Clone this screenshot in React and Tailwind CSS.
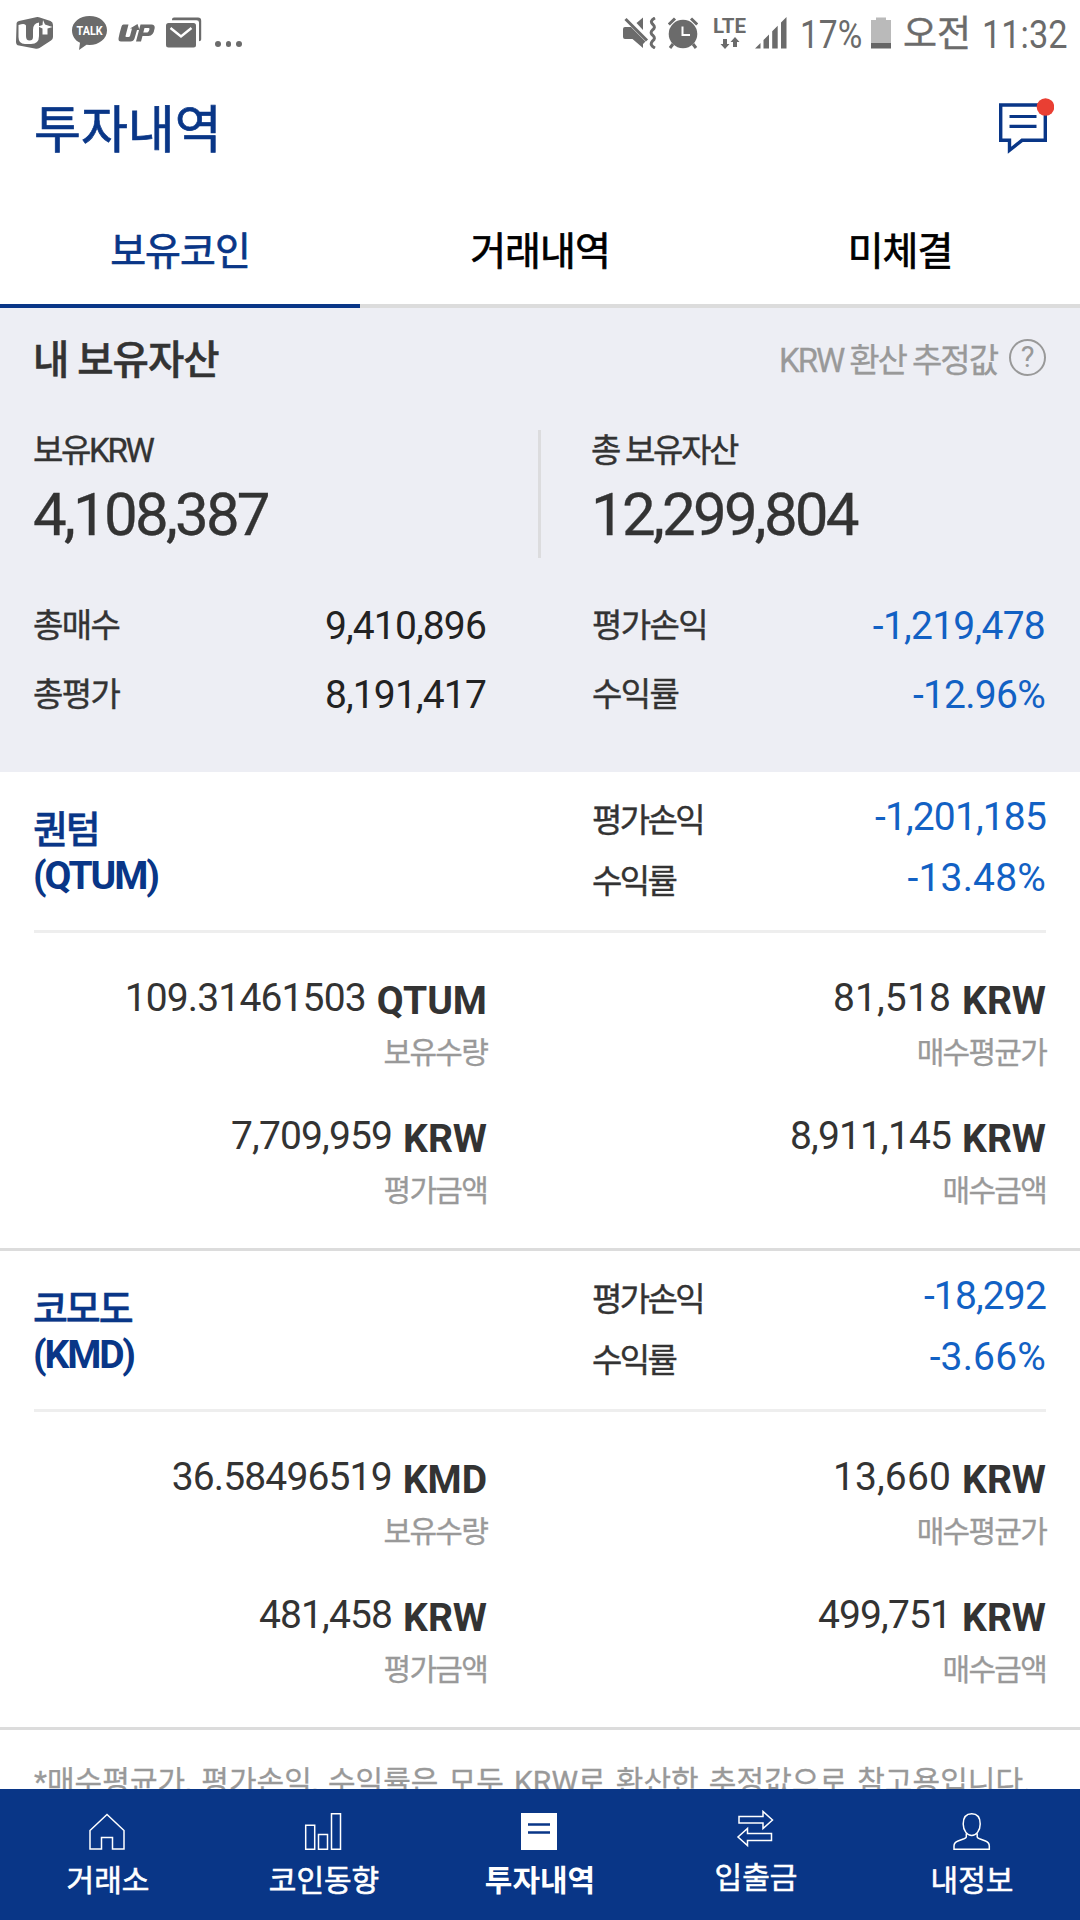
/* ---------- status bar icons ---------- */
function UPlusIcon() {
  return (
    <svg className="ml-4 h-8 w-[38px]" viewBox="0 0 38 32" fill="#6b6b6b">
      <path d="M3 4 Q1 4.6 0.600 6 L0 25 Q0 28 3 28.600 L20 31.800 Q22 32 23.500 31 L35 23.500 Q37 22 37 20 V8 Q37 5 34.500 4 L23 0.300 Q21.500 -0.200 20 0.200 Z" />
      <path d="M2.500 8 Q9 5.600 10 8.500 V19 Q10 23.500 13.500 23.500 Q17 23.500 17 20 V13 Q17 6 23 5.500 V19 Q23 27 15 27 H9 Q2.500 27 2.500 20 Z" fill="#fff" />
      <path d="M27 3 L29 7.500 L36.500 10 L31.500 11.500 V17.500 H26.500 V11.500 L22 9.500 L26.500 8 Z" fill="#fff" />
    </svg>
  );
}

function TalkIcon() {
  return (
    <svg className="ml-[18px] h-[34px] w-9" viewBox="0 0 36 34">
      <path d="M17.500 0 C27.500 0 35 6 35 14.300 C35 23 27 29 17.500 29 L14.500 28.700 L7 34 L8 26.800 C3 24.500 0 20 0 14.300 C0 6 8 0 17.500 0 Z" fill="#6b6b6b" />
      <text x="17.600" y="19" textAnchor="middle" fontSize="12.500" fontWeight="700" fontFamily="Roboto, sans-serif" fill="#fff" textLength="26" lengthAdjust="spacingAndGlyphs">TALK</text>
    </svg>
  );
}

function UpIcon() {
  return (
    <svg className="ml-[10px] h-[18px] w-[38px]" viewBox="0 0 38 18" fill="#6b6b6b">
      <path d="M5.500 0.500 H10.500 L7.500 12 Q7.300 13 8.500 13 H10.500 Q11.500 13 12 12 L14 4.500 H12 L19.500 0 L21.500 6 H19 L16.500 14.500 Q15.500 17.500 12.500 17.500 H3 Q0 17.500 0.600 14 Q1.500 9 3.500 2.500 Q4 0.500 5.500 0.500 Z" />
      <path fillRule="evenodd" d="M22.500 0.500 H33.500 Q37 0.500 36.700 4 Q35.500 12 30.500 12 H24.500 L23 17.500 H18 Z M26.500 4 L25.300 8.500 H29.500 Q31.300 8 31.500 5 Q31.500 4 30.500 4 Z" />
    </svg>
  );
}

function MailIcon() {
  return (
    <svg className="ml-[10px] h-[31px] w-9" viewBox="0 0 36 31">
      <path d="M6 3.200 V2.500 Q6 0.500 8 0.500 H32 Q35.200 0.500 35.200 3.700 V22.500 Q35.200 24.200 33 24.200 V5.500 Q33 3.200 30.500 3.200 Z" fill="#6b6b6b" />
      <rect x="0" y="6" width="30" height="24.500" rx="2.500" fill="#6b6b6b" />
      <path d="M4.500 11 L15 19.500 L25.500 11" fill="none" stroke="#fff" strokeWidth="2.400" />
    </svg>
  );
}

function MuteIcon() {
  return (
    <svg className="h-8 w-[34px]" viewBox="0 0 34 32" fill="#6b6b6b">
      <path d="M0 12 Q0 10 2 10 H8 L22.500 24.500 L20 27 V31 L9.500 22 H2 Q0 22 0 20 Z" />
      <path d="M13.500 6 L20 0.500 V13 Z" />
      <path d="M2.500 2 L24 23.500" stroke="#6b6b6b" strokeWidth="3" />
      <path d="M32 1 Q26 4 30 7.500 Q33 10.500 29.500 13 Q26.500 16 30 18.500 Q33 21.500 29.500 24 Q26 28 32 31" fill="none" stroke="#6b6b6b" strokeWidth="3" />
    </svg>
  );
}

function AlarmIcon() {
  return (
    <svg className="ml-[11px] h-8 w-[30px]" viewBox="0 0 30 32">
      <circle cx="15" cy="17" r="14.300" fill="#6b6b6b" />
      <path d="M0.800 7.500 L7 1.500 M29.200 7.500 L23 1.500" stroke="#6b6b6b" strokeWidth="3" />
      <path d="M5 27 L2 31 M25 27 L28 31" stroke="#6b6b6b" strokeWidth="3" />
      <path d="M14.500 9.500 V18 H22" fill="none" stroke="#fff" strokeWidth="2" />
    </svg>
  );
}

function LteIcon() {
  return (
    <svg className="ml-[15px] h-8 w-[33px] overflow-visible" viewBox="0 0 33 32">
      <text x="0" y="16" fontSize="20" fontWeight="700" fontFamily="Roboto, sans-serif" fill="#6b6b6b" textLength="33" lengthAdjust="spacingAndGlyphs">LTE</text>
      <path d="M10 22 H14 V27 H16.500 L12 32 L7.500 27 H10 Z M20 30 H24 V25 H26.500 L22 20 L17.500 25 H20 Z" fill="#6b6b6b" />
    </svg>
  );
}

function SignalIcon() {
  return (
    <svg className="ml-[9px] h-8 w-8" viewBox="0 0 32 32" fill="#6b6b6b">
      <path d="M0 31.500 L5.500 26 V31.500 Z M8.500 23 L14 17.500 V31.500 H8.500 Z M17.200 14.300 L22.700 8.800 V31.500 H17.200 Z M26 5.500 L31.500 0 V31.500 H26 Z" />
    </svg>
  );
}

function StatusBar() {
  return (
    <div className="flex h-[70px] items-center justify-between text-[#6b6b6b]">
      <div className="mb-[5px] flex items-center">
        <UPlusIcon />
        <TalkIcon />
        <UpIcon />
        <MailIcon />
        <div className="mt-[23px] ml-[13px] flex gap-[5px]">
          <i className="size-[5.5px] rounded-full bg-[#6b6b6b]" />
          <i className="size-[5.5px] rounded-full bg-[#6b6b6b]" />
          <i className="size-[5.5px] rounded-full bg-[#6b6b6b]" />
        </div>
      </div>
      <div className="flex items-center leading-[70px]">
        <div className="mb-[5px] flex items-center">
          <MuteIcon />
          <AlarmIcon />
          <LteIcon />
          <SignalIcon />
        </div>
        <span className="ml-[13px] w-[60px] origin-left scale-x-[0.86] text-[39px] whitespace-nowrap">17%</span>
        <svg className="mb-[5px] ml-[11px] h-8 w-5" viewBox="0 0 20 32">
          <path d="M0 3 H5 V0.500 H15 V3 H20 V26 H0 Z" fill="#bababa" />
          <rect y="26" width="20" height="5.500" fill="#666" />
        </svg>
        <span className="ml-3 w-[79px] text-[37px] [-webkit-text-stroke:0.4px]">오전</span>
        <span className="w-[98px] origin-left scale-x-[0.88] text-[39px]">11:32</span>
      </div>
    </div>
  );
}

/* ---------- header and tabs ---------- */
function Header() {
  return (
    <header className="flex h-[122px] items-center justify-between pr-[26px] pl-[34px]">
      <h1 className="text-[51px] leading-[122px] font-normal text-[#093687] [-webkit-text-stroke:0.7px]">투자내역</h1>
      <svg className="mb-[9px] h-[57px] w-[55px]" viewBox="0 0 55 57">
        <path d="M1.700 7 H46.300 V42.300 H23 L10.500 52.300 V42.300 H1.700 Z" fill="none" stroke="#093687" strokeWidth="3.400" />
        <path d="M10.500 18.500 H37.500 M10.500 28.300 H37.500" stroke="#093687" strokeWidth="3.200" />
        <circle cx="46.500" cy="9" r="8.800" fill="#e93f33" />
      </svg>
    </header>
  );
}

function Tabs() {
  return (
    <nav className="grid h-[116px] grid-cols-3 text-center text-[39px] leading-[100px] tracking-[-0.025em] [-webkit-text-stroke:0.7px]">
      <span className="border-b-4 border-[#093687] pt-[10px] text-[#093687]">보유코인</span>
      <span className="border-b-4 border-[#dcdcdc] pt-[10px] text-black">거래내역</span>
      <span className="border-b-4 border-[#dcdcdc] pt-[10px] text-black">미체결</span>
    </nav>
  );
}

/* ---------- summary ---------- */
function Total({ label, value }) {
  return (
    <div className="text-[#333]">
      <div className="text-[33px] leading-[42px] tracking-[-0.07em] [-webkit-text-stroke:0.4px]">{label}</div>
      <div className="text-[60px] leading-[86px] tracking-[-0.046em] [-webkit-text-stroke:0.3px]">{value}</div>
    </div>
  );
}

function SummaryRow({ label, value, blue }) {
  return (
    <div className="flex h-[69px] items-center justify-between">
      <span className="text-[33px] tracking-[-0.05em] text-[#333] [-webkit-text-stroke:0.4px]">{label}</span>
      <span className={blue ? "mt-[2px] mr-px text-[39px] tracking-[-0.019em] text-[#1261c4]" : "mt-[2px] text-[39px] tracking-[-0.022em] text-[#222]"}>{value}</span>
    </div>
  );
}

function Summary() {
  return (
    <section className="h-[464px] bg-[#edeef4] pt-[23px] pr-[34px] pl-[33px]">
      <div className="flex h-[60px] items-center justify-between">
        <h2 className="mb-px text-[39.5px] font-medium tracking-[-0.025em] text-[#333] [-webkit-text-stroke:0.5px]">내 보유자산</h2>
        <div className="flex items-center text-[#999]">
          <span className="mb-px text-[33px] tracking-[-0.062em] [-webkit-text-stroke:0.3px]">KRW 환산 추정값</span>
          <span className="mb-[7px] ml-[12px] flex size-[37px] items-center justify-center rounded-full border-2 border-[#999] text-[29px] leading-none">?</span>
        </div>
      </div>
      <div className="mt-[39px] flex h-32">
        <div className="w-[505px]">
          <Total label="보유KRW" value="4,108,387" />
        </div>
        <div className="h-32 w-[3px] bg-[#dcdcde]" />
        <div className="ml-[50px]">
          <Total label="총 보유자산" value="12,299,804" />
        </div>
      </div>
      <div className="mt-[33px] grid grid-cols-[453px_454px] justify-between">
        <SummaryRow label="총매수" value="9,410,896" />
        <SummaryRow label="평가손익" value="-1,219,478" blue />
        <SummaryRow label="총평가" value="8,191,417" />
        <SummaryRow label="수익률" value="-12.96%" blue />
      </div>
    </section>
  );
}

/* ---------- coin cards ---------- */
function Profit({ label, value, tight }) {
  return (
    <div className="flex h-[61px] items-center justify-between">
      <span className="mt-[9px] text-[33px] tracking-[-0.08em] text-[#333] [-webkit-text-stroke:0.4px]">{label}</span>
      <span className={tight ? "mt-[2px] text-[39px] tracking-[-0.022em] text-[#1261c4]" : "mt-[2px] text-[39px] tracking-[0.004em] text-[#1261c4]"}>{value}</span>
    </div>
  );
}

function Detail({ value, unit, label, wide }) {
  return (
    <div className="text-right">
      <div className="flex h-[60px] items-center justify-end text-[39px] text-[#333]">
        <span className={wide ? "tracking-[0.004em]" : "tracking-[-0.022em]"}>{value}</span>
        <b className="mt-[6px] ml-[11px] font-bold">{unit}</b>
      </div>
      <div className="text-[30px] leading-[49px] tracking-[-0.058em] text-[#999] [-webkit-text-stroke:0.3px]">{label}</div>
    </div>
  );
}

function CoinCard({ name, code, pl, rate, qty, avg, evalAmount, buyAmount }) {
  return (
    <section className="h-[479px] border-b-3 border-[#dcdcdc]">
      <div className="mx-[34px] flex h-[161px] justify-between border-b-3 border-[#eee]">
        <div className="-ml-px pt-[35px] font-bold text-[#093687]">
          <div className="text-[38px] leading-[46px] font-medium tracking-[-0.055em] [-webkit-text-stroke:0.4px]">{name}</div>
          <div className="pt-[2px] text-[39px] leading-[43px] tracking-[-0.055em]">({code})</div>
        </div>
        <div className="w-[454px] pt-[14px]">
          <Profit label="평가손익" value={pl} tight />
          <Profit label="수익률" value={rate} />
        </div>
      </div>
      <div className="grid grid-cols-[487px_559px] gap-y-[29px] pt-[35px]">
        <Detail value={qty} unit={code} label="보유수량" />
        <Detail value={avg} unit="KRW" label="매수평균가" wide />
        <Detail value={evalAmount} unit="KRW" label="평가금액" />
        <Detail value={buyAmount} unit="KRW" label="매수금액" />
      </div>
    </section>
  );
}

/* ---------- bottom navigation ---------- */
function HomeIcon() {
  return <path d="M1 17.500 L18 1.500 L35 17.500 V36 H23.500 V24.500 H12.500 V36 H1 Z" />;
}
function ChartIcon() {
  return <path d="M0.700 12.300 H9.700 V36.300 H0.700 Z M13.500 21.500 H22.500 V36.300 H13.500 Z M26.500 0.700 H35.500 V36.300 H26.500 Z" />;
}
function DocIcon() {
  return (
    <>
      <rect x="0" y="0" width="36" height="37" fill="#fff" stroke="none" />
      <path d="M7 11.500 H29 M7 19.500 H29" stroke="#093687" strokeWidth="2.600" />
    </>
  );
}
function TransferIcon() {
  return (
    <path d="M2 6.500 H26 V1.500 L35.500 10 L26 18.500 V13 H2 Z M34.500 23.500 H10.500 V18.500 L1 27 L10.500 35.500 V30.500 H34.500 Z" />
  );
}
function PersonIcon() {
  return (
    <path d="M13.300 20.500 V24 Q13 25 11 25.800 L5 28 Q1 29.500 1 33 V36.300 H36.300 V33 Q36.300 29.500 32.500 28 L26.500 25.800 Q24.500 25 24.200 24 V20.500 M18.700 0.700 C13 0.700 10.200 4.500 10.200 11 C10.200 18 14.500 22.500 18.700 22.500 C23 22.500 27.200 18 27.200 11 C27.200 4.500 24.500 0.700 18.700 0.700 Z" />
  );
}

function NavItem({ icon: Icon, label, active, raised }) {
  return (
    <div className={raised ? "flex flex-col items-center pt-[21px]" : "flex flex-col items-center pt-6"}>
      <svg className="-ml-px h-[37px] w-[37px] overflow-visible" viewBox="0 0 37 37" fill="none" stroke="#fff" strokeWidth="1.500">
        <Icon />
      </svg>
      <span className={active ? "mt-[11px] text-[30px] leading-10 font-bold" : "mt-[11px] text-[30px] leading-10 [-webkit-text-stroke:0.6px]"}>{label}</span>
    </div>
  );
}

export default function App() {
  return (
    <div className="flex h-[1920px] w-[1080px] flex-col overflow-hidden bg-white font-[Roboto,'Noto_Sans_CJK_KR',sans-serif]">
      <StatusBar />
      <Header />
      <Tabs />
      <Summary />
      <CoinCard name="퀀텀" code="QTUM" pl="-1,201,185" rate="-13.48%" qty="109.31461503" avg="81,518" evalAmount="7,709,959" buyAmount="8,911,145" />
      <CoinCard name="코모도" code="KMD" pl="-18,292" rate="-3.66%" qty="36.58496519" avg="13,660" evalAmount="481,458" buyAmount="499,751" />
      <div className="h-[59px] overflow-hidden">
        <p className="mt-[22px] ml-[34px] text-[30px] leading-[60px] tracking-[0.05px] whitespace-nowrap text-[#999] [-webkit-text-stroke:0.3px] [word-spacing:2.6px]">
          *매수평균가, 평가손익, 수익률은 모두 KRW로 환산한 추정값으로 참고용입니다.
        </p>
      </div>
      <nav className="grid h-[131px] grid-cols-5 bg-[#093687] text-white">
        <NavItem icon={HomeIcon} label="거래소" />
        <NavItem icon={ChartIcon} label="코인동향" />
        <NavItem icon={DocIcon} label="투자내역" active />
        <NavItem icon={TransferIcon} label="입출금" raised />
        <NavItem icon={PersonIcon} label="내정보" />
      </nav>
    </div>
  );
}
